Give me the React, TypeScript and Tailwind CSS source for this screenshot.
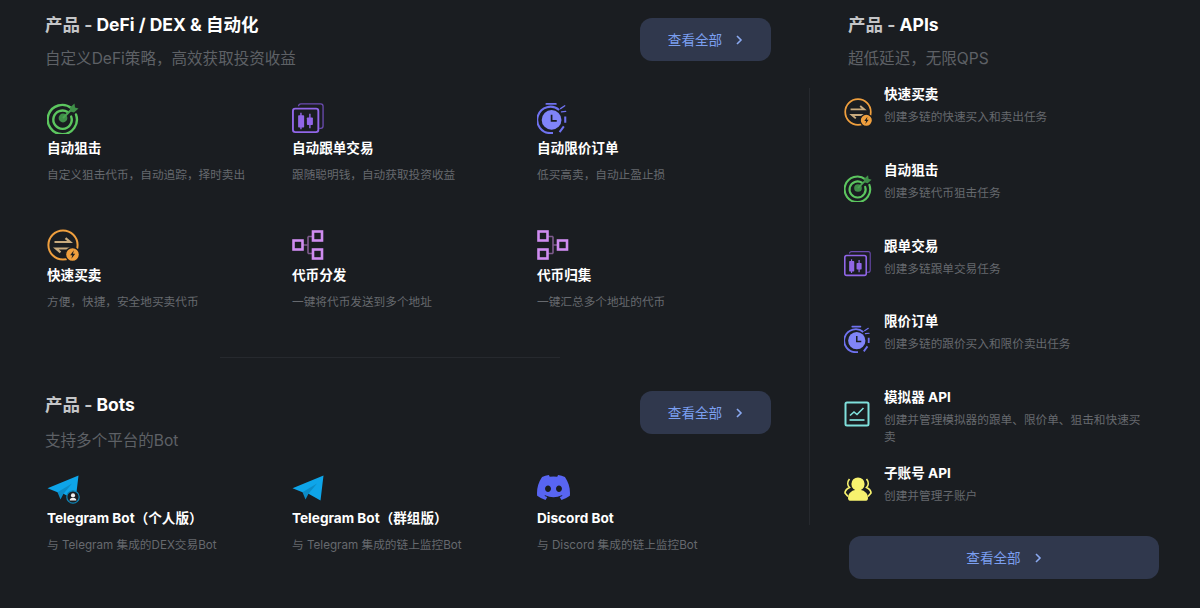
const FONT = "font-['Inter','Noto_Sans_CJK_SC',sans-serif]";

type IconProps = { size?: number };

function TargetIcon({ size = 32 }: IconProps) {
  return (
    <svg width={size} height={size} viewBox="0 0 32 32" fill="none">
      <path d="M24.5 6.2A14.6 14.6 0 1 0 29 12.5" stroke="#5cc65f" strokeWidth="2.4" strokeLinecap="round" />
      <path d="M20.6 10A9.2 9.2 0 1 0 24.2 14.6" stroke="#5cc65f" strokeWidth="2.4" strokeLinecap="round" />
      <circle cx="16" cy="16" r="4.4" fill="#3f8f48" />
      <path d="M16 16 25 7" stroke="#4aa552" strokeWidth="2" />
      <path d="M23 5.5 27.5 1.5 28 5.5 31.5 6.5 27 10.5 23 9.5Z" fill="#3f8f48" />
    </svg>
  );
}

function CandleIcon({ size = 32 }: IconProps) {
  return (
    <svg width={size} height={size} viewBox="0 0 34 32" fill="none">
      <path d="M7 3.5C7 2 8 1 9.5 1H30.5C32 1 33 2 33 3.5V24.5C33 26 32 27 30.5 27H29" stroke="#6b4bb0" strokeWidth="1.4" />
      <rect x="1" y="6" width="27" height="25" rx="2.5" fill="#1a1d21" stroke="#9166e8" strokeWidth="2" />
      <path d="M9.5 10.5V28M19 11.5V27" stroke="#9166e8" strokeWidth="1.5" />
      <rect x="6.5" y="13" width="6.4" height="13" rx="0.8" fill="#9166e8" />
      <rect x="15.8" y="15.5" width="6.4" height="8" rx="0.8" fill="#9166e8" />
    </svg>
  );
}

function ClockIcon({ size = 32 }: IconProps) {
  return (
    <svg width={size} height={size} viewBox="0 0 32 34" fill="none">
      <path d="M9 2H19" stroke="#6f72f0" strokeWidth="2" strokeLinecap="round" />
      <path d="M24 7 28.5 4M25 10.5 29.5 10" stroke="#6f72f0" strokeWidth="1.4" strokeLinecap="round" />
      <path d="M22.5 8.5A14 14 0 1 0 14 33H16" stroke="#6f72f0" strokeWidth="2.2" />
      <circle cx="14.5" cy="19" r="10.5" fill="#8084f8" />
      <path d="M14.5 13.5V20H20" stroke="#1a1d21" strokeWidth="1.8" />
      <path d="M29 15.5V22M27.5 26 23 32" stroke="#6f72f0" strokeWidth="2.2" />
    </svg>
  );
}

function SwapIcon({ size = 32 }: IconProps) {
  return (
    <svg width={size} height={size} viewBox="0 0 32 32" fill="none">
      <circle cx="16" cy="16" r="14.6" stroke="#ef9f3e" strokeWidth="2" />
      <path d="M7.5 13H23L18.5 9.2M24.5 19.5H9L13.5 23.3" stroke="#c9ab7e" strokeWidth="2.2" />
      <circle cx="25.5" cy="25.5" r="7" fill="#ef9f3e" stroke="#1a1d21" strokeWidth="1.4" />
      <path d="M26.8 21.3 23.2 26.2H25.3L24.4 29.8 28.2 24.8H26Z" fill="#1a1d21" />
    </svg>
  );
}

function SplitIcon() {
  return (
    <svg width="32" height="30" viewBox="0 0 32 30" fill="none">
      <path d="M11 15H16M16 6.5V23.5M16 6.5H21M16 23.5H21" stroke="#7d5a8c" strokeWidth="1.6" />
      <rect x="1.5" y="10.5" width="9" height="9" stroke="#cf8cf0" strokeWidth="2.6" />
      <rect x="21" y="1.5" width="9" height="9" stroke="#cf8cf0" strokeWidth="2.6" />
      <rect x="21" y="19.5" width="9" height="9" stroke="#cf8cf0" strokeWidth="2.6" />
    </svg>
  );
}

function MergeIcon() {
  return (
    <svg width="32" height="30" viewBox="0 0 32 30" fill="none">
      <path d="M11 6.5H16M11 23.5H16M16 6.5V23.5M16 15H21" stroke="#7d5a8c" strokeWidth="1.6" />
      <rect x="1.5" y="1.5" width="9" height="9" stroke="#cf8cf0" strokeWidth="2.6" />
      <rect x="1.5" y="19.5" width="9" height="9" stroke="#cf8cf0" strokeWidth="2.6" />
      <rect x="21" y="10.5" width="9" height="9" stroke="#cf8cf0" strokeWidth="2.6" />
    </svg>
  );
}

function PlaneIcon({ badge = false }: { badge?: boolean }) {
  return (
    <svg width="36" height="29" viewBox="0 0 36 29" fill="none" className="mt-[3px] self-start">
      <path d="M31.5 0.5 0.5 13.2 10.5 17.2 16.5 18.8 28.5 25.5Z" fill="#0ea5e9" />
      <path d="M10.5 17.2 13.5 24.5 16.5 18.8 25 8.5Z" fill="#0c8cc7" />
      {badge && (
        <g>
          <circle cx="26" cy="22" r="6.2" fill="#1a1d21" stroke="#0e86b8" strokeWidth="1.2" />
          <circle cx="26" cy="20.4" r="2.1" fill="#f1f1f1" />
          <path d="M22.6 25.4C22.8 23.5 24 23 26 23S29.2 23.5 29.4 25.4Z" fill="#f1f1f1" />
        </g>
      )}
    </svg>
  );
}

function DiscordIcon() {
  return (
    <svg width="33" height="25" viewBox="0 0 127.14 96.36" className="mt-[3px] self-start">
      <path
        fill="#5865f2"
        d="M107.7 8.07A105.15 105.15 0 0 0 81.47 0a72.06 72.06 0 0 0-3.36 6.83 97.68 97.68 0 0 0-29.11 0A72.37 72.37 0 0 0 45.64 0a105.89 105.89 0 0 0-26.25 8.09C2.79 32.65-1.71 56.6.54 80.21a105.73 105.73 0 0 0 32.17 16.15 77.7 77.7 0 0 0 6.89-11.11 68.42 68.42 0 0 1-10.85-5.18c.91-.66 1.8-1.34 2.66-2a75.57 75.57 0 0 0 64.32 0c.87.71 1.76 1.39 2.66 2a68.68 68.68 0 0 1-10.87 5.19 77 77 0 0 0 6.89 11.1 105.25 105.25 0 0 0 32.19-16.14c2.64-27.38-4.51-51.11-18.9-72.15ZM42.45 65.69C36.18 65.69 31 60 31 53s5-12.74 11.43-12.74S54 46 53.89 53s-5.05 12.69-11.44 12.69Zm42.24 0C78.41 65.69 73.25 60 73.25 53s5-12.74 11.44-12.74S96.23 46 96.12 53s-5.04 12.69-11.43 12.69Z"
      />
    </svg>
  );
}

function ChartIcon() {
  return (
    <svg width="26" height="26" viewBox="0 0 26 26" fill="none">
      <rect x="1.5" y="1.5" width="23" height="23" rx="1.5" stroke="#7fe0dc" strokeWidth="2" />
      <path d="M6 14.5 10 11 13 13.5 19.5 7" stroke="#7fe0dc" strokeWidth="1.6" />
      <path d="M5.5 19H20.5" stroke="#7fe0dc" strokeWidth="1.7" />
    </svg>
  );
}

function UsersIcon() {
  return (
    <svg width="28" height="24" viewBox="0 0 28 24" fill="none">
      <circle cx="14" cy="7" r="6.6" fill="#f7f26e" />
      <path d="M4 21C4 16 8.500 12.500 14 12.500S24 16 24 21C24 23 23 23.800 21 23.800H7C5 23.800 4 23 4 21Z" fill="#f7f26e" />
      <path d="M5.500 2C3 5 3.500 8.500 5.500 10.500 2.500 12 1 14.500 1 16L4 19.500M22.500 2C25 5 24.500 8.500 22.500 10.500 25.500 12 27 14.500 27 16L24 19.500" stroke="#f7f26e" strokeWidth="1.7" />
    </svg>
  );
}

function ViewAll({ className }: { className: string }) {
  return (
    <button className={`flex h-[43px] items-center justify-center rounded-xl bg-[#30384d] pt-px text-[13.6px] text-[#7b9ff0] ${className}`}>
      查看全部
      <svg width="8" height="10" viewBox="0 0 8 10" fill="none" className="ml-[13px]">
        <path d="M2 1 6 5 2 9" stroke="#8aa9f0" strokeWidth="1.6" />
      </svg>
    </button>
  );
}

function Heading({ name, sub, subGap = "mt-[6px]" }: { name: string; sub: string; subGap?: string }) {
  return (
    <div>
      <h2 className="text-[17.5px] leading-7 font-bold text-white">
        <span className="text-[#c4c5c7]">产品 - </span>
        {name}
      </h2>
      <p className={`${subGap} text-[15.55px] leading-7 text-[#5e6166]`}>{sub}</p>
    </div>
  );
}

function Card({ icon, title, desc }: { icon: React.ReactNode; title: string; desc: string }) {
  return (
    <div className="pl-[2px]">
      <div className="flex h-[32px] items-center">{icon}</div>
      <div className="mt-[4px] text-[13.6px] leading-5 font-bold text-white">{title}</div>
      <div className="mt-[7px] text-[11.66px] leading-5 text-[#66696e]">{desc}</div>
    </div>
  );
}

const defi = [
  { icon: <TargetIcon />, title: "自动狙击", desc: "自定义狙击代币，自动追踪，择时卖出" },
  { icon: <CandleIcon />, title: "自动跟单交易", desc: "跟随聪明钱，自动获取投资收益" },
  { icon: <ClockIcon />, title: "自动限价订单", desc: "低买高卖，自动止盈止损" },
  { icon: <SwapIcon />, title: "快速买卖", desc: "方便，快捷，安全地买卖代币" },
  { icon: <SplitIcon />, title: "代币分发", desc: "一键将代币发送到多个地址" },
  { icon: <MergeIcon />, title: "代币归集", desc: "一键汇总多个地址的代币" },
];

const bots = [
  { icon: <PlaneIcon badge />, title: "Telegram Bot（个人版）", desc: "与 Telegram 集成的DEX交易Bot" },
  { icon: <PlaneIcon />, title: "Telegram Bot（群组版）", desc: "与 Telegram 集成的链上监控Bot" },
  { icon: <DiscordIcon />, title: "Discord Bot", desc: "与 Discord 集成的链上监控Bot" },
];

const apis = [
  { icon: <SwapIcon size={28} />, title: "快速买卖", desc: "创建多链的快速买入和卖出任务" },
  { icon: <TargetIcon size={28} />, title: "自动狙击", desc: "创建多链代币狙击任务" },
  { icon: <CandleIcon size={27} />, title: "跟单交易", desc: "创建多链跟单交易任务" },
  { icon: <ClockIcon size={28} />, title: "限价订单", desc: "创建多链的跟价买入和限价卖出任务" },
  { icon: <ChartIcon />, title: "模拟器 API", desc: "创建并管理模拟器的跟单、限价单、狙击和快速买卖" },
  { icon: <UsersIcon />, title: "子账号 API", desc: "创建并管理子账户" },
];

export default function App() {
  return (
    <div className={`flex h-[608px] w-[1200px] overflow-hidden bg-[#1a1d21] ${FONT}`}>
      <div className="ml-[45px] w-[726px] pt-[11px]">
        <div className="flex items-start justify-between">
          <Heading name="DeFi / DEX & 自动化" sub="自定义DeFi策略，高效获取投资收益" />
          <ViewAll className="mt-[7px] w-[131px]" />
        </div>
        <div className="mt-[29px] grid grid-cols-[245px_245px_1fr] gap-y-[44px]">
          {defi.map((d) => (
            <Card key={d.title} {...d} />
          ))}
        </div>
        <div className="mt-[45px] ml-[175px] h-px w-[340px] bg-[#26292e]" />
        <div className="mt-[33px] flex items-start justify-between">
          <Heading name="Bots" sub="支持多个平台的Bot" subGap="mt-[8px]" />
          <ViewAll className="w-[131px]" />
        </div>
        <div className="mt-[17px] grid grid-cols-[245px_245px_1fr]">
          {bots.map((d) => (
            <Card key={d.title} {...d} />
          ))}
        </div>
      </div>
      <div className="ml-[38px] w-[350px] pt-[11px]">
        <div className="pl-[39px]">
          <Heading name="APIs" sub="超低延迟，无限QPS" />
        </div>
        <div className="mt-[15px] flex h-[437px] w-[340px] flex-col border-l border-[#26292e] pl-[34px]">
          {apis.map((a) => (
            <div key={a.title} className="flex h-[75.8px] shrink-0 items-start first:-mt-[3px] last:h-auto">
              <div className="mt-[13px] flex w-[40px] shrink-0 items-center">{a.icon}</div>
              <div className="w-[270px]">
                <div className="text-[13.6px] leading-[18px] font-bold text-white">{a.title}</div>
                <div className="mt-[6px] text-[11.66px] leading-[17px] text-[#66696e]">{a.desc}</div>
              </div>
            </div>
          ))}
        </div>
        <ViewAll className="mt-[11px] ml-[40px] w-[310px]" />
      </div>
    </div>
  );
}
